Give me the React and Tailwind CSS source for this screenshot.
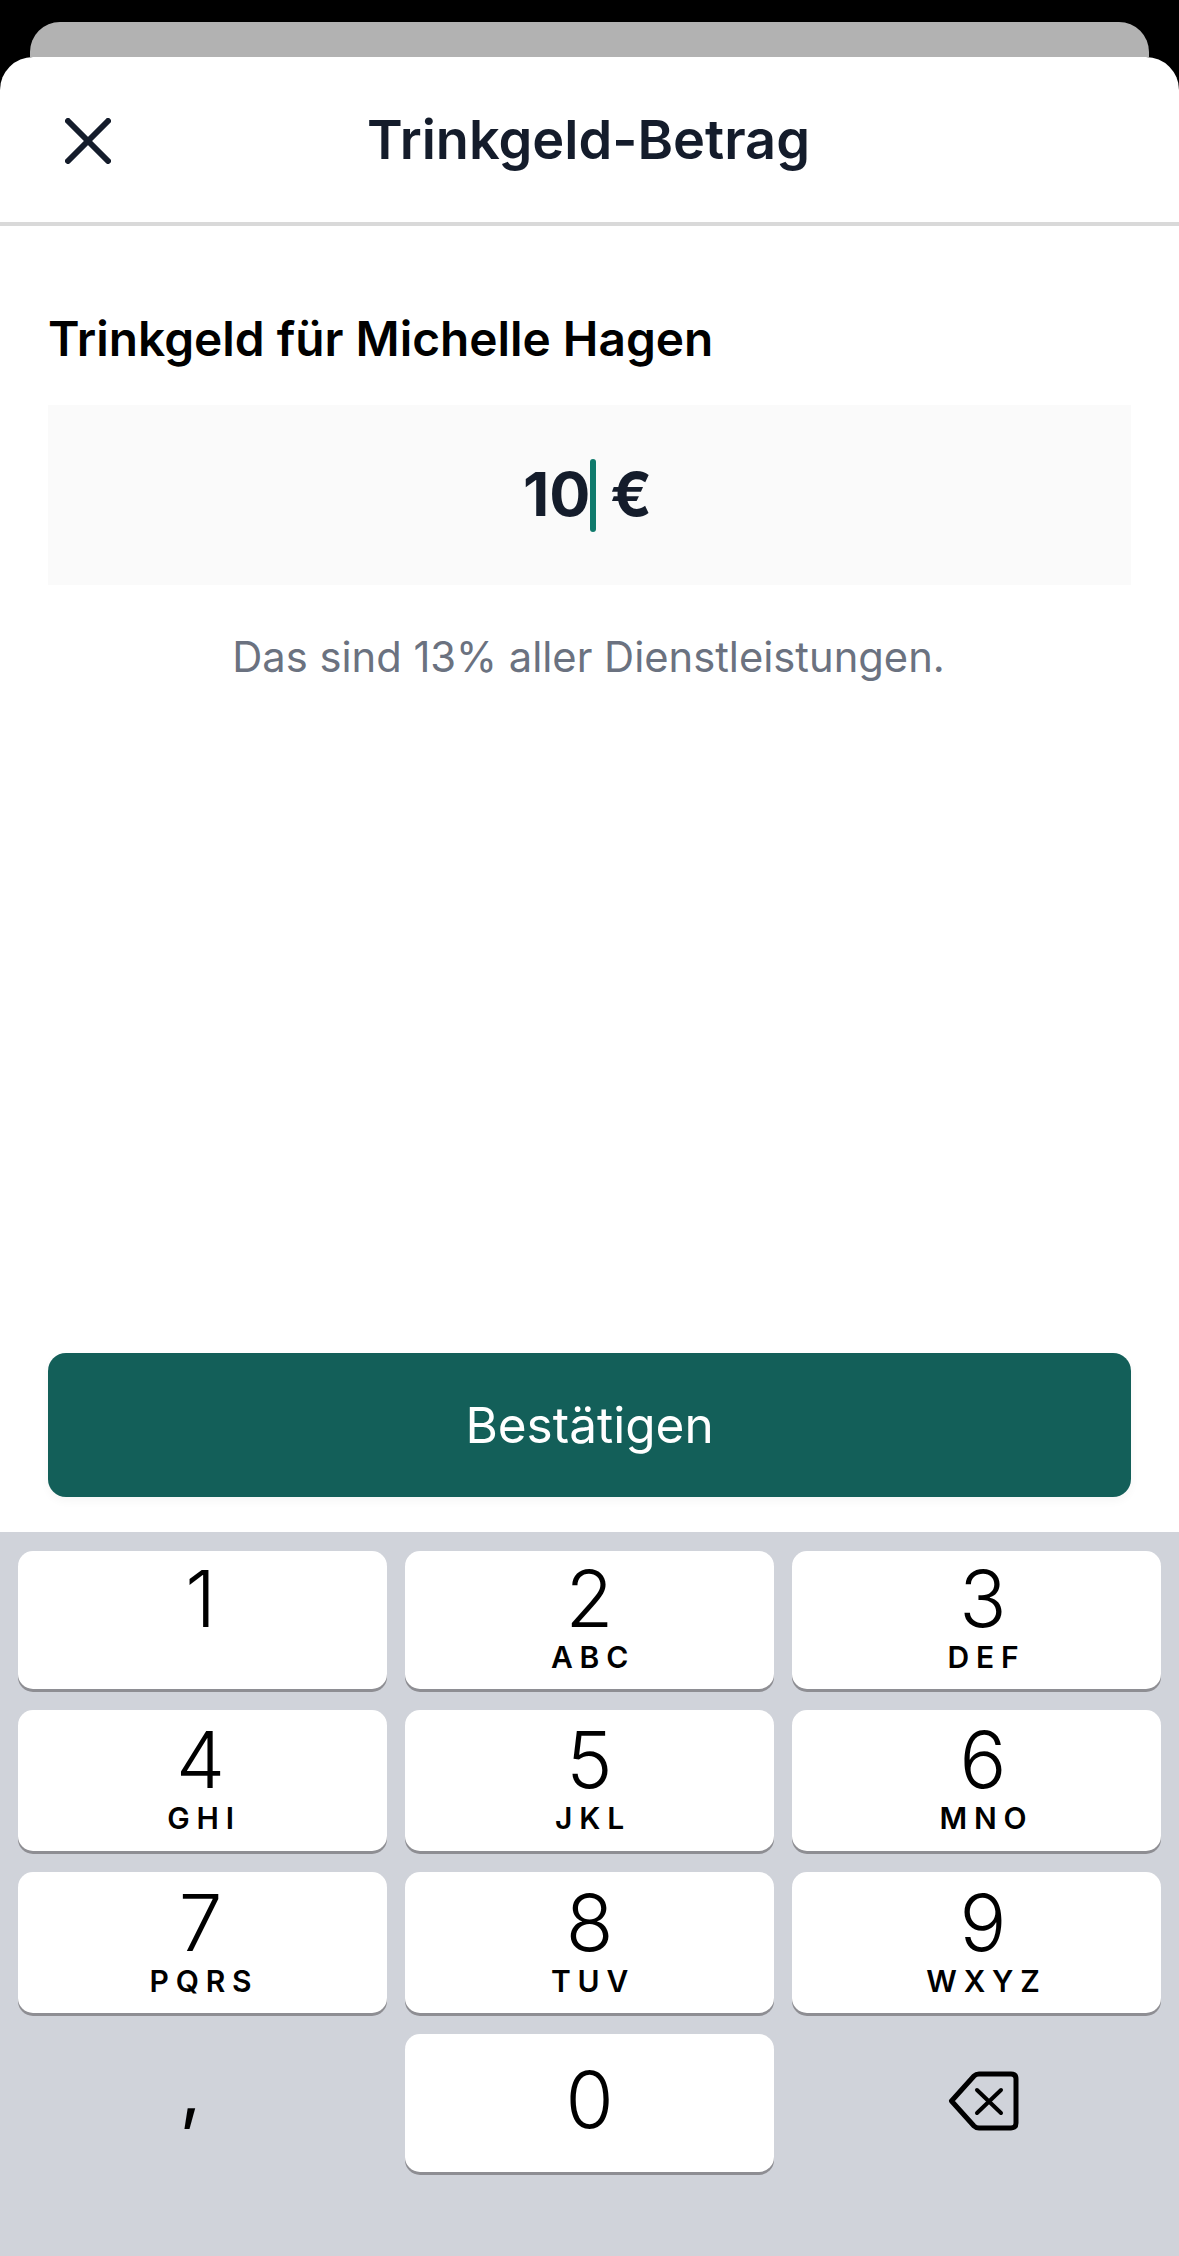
import React from 'react';

const rows = [
  { height: 'h-[138px]', top: 'pt-[10px]', keys: [['1', ''], ['2', 'ABC'], ['3', 'DEF']] },
  { height: 'h-[141px]', top: 'pt-[12px]', keys: [['4', 'GHI'], ['5', 'JKL'], ['6', 'MNO']] },
  { height: 'h-[141px]', top: 'pt-[13px]', keys: [['7', 'PQRS'], ['8', 'TUV'], ['9', 'WXYZ']] },
];

// last column in the reference sits a few pixels right of the key center
const columnOffset = ['pr-[4px]', '', 'pl-[13px]'];

const Key = ({ digit, letters, height, top, offset = '' }) => (
  <div className={`${height} ${top} ${offset} flex flex-col items-center rounded-[15px] bg-white text-black shadow-[0_3px_0_#8e8e93]`}>
    <span className="text-[78px] leading-[75px] font-[350]">{digit}</span>
    {letters && (
      <span className="mt-[3px] pl-[7px] text-[30px] leading-[36px] font-semibold tracking-[6.8px]">{letters}</span>
    )}
  </div>
);

const CloseIcon = () => (
  <svg width="46" height="46" viewBox="0 0 46 46" fill="none" stroke="#141c2b" strokeWidth="6" strokeLinecap="round">
    <path d="M3 3 L43 43" />
    <path d="M43 3 L3 43" />
  </svg>
);

const BackspaceIcon = () => (
  <svg width="72" height="60" viewBox="0 0 72 60" fill="none" stroke="#000" strokeLinejoin="round" strokeLinecap="round">
    <path d="M3.5 30 L26 5 Q28 3 31 3 L63 3 Q68 3 68 8 L68 52 Q68 57 63 57 L31 57 Q28 57 26 55 Z" strokeWidth="5" />
    <path d="M29 19 L53 42 M53 19 L29 42" strokeWidth="4" />
  </svg>
);

export default function App() {
  return (
    <div className="flex h-[2256px] flex-col overflow-hidden bg-black font-['Inter',sans-serif]">
      <div className="mx-[30px] mt-[22px] h-[35px] shrink-0 rounded-t-[30px] bg-[#b2b2b2]" />

      <div className="flex flex-1 flex-col rounded-t-[33px] bg-white">
        {/* Header */}
        <div className="relative flex h-[169px] shrink-0 items-center justify-center border-b-4 border-[#d9d9d9]">
          <button className="absolute left-[65px] top-[61px]">
            <CloseIcon />
          </button>
          <h1 className="pr-[2px] text-[54.1px] leading-[64px] font-semibold text-[#141c2b]">Trinkgeld-Betrag</h1>
        </div>

        {/* Tip form */}
        <div className="flex flex-1 flex-col px-[48px]">
          <h2 className="mt-[85px] text-[47.8px] leading-[56px] font-semibold text-black">Trinkgeld für Michelle Hagen</h2>
          <div className="mt-[38px] flex h-[180px] items-center justify-center bg-[#fafafa] pr-[4px] text-[61px] font-bold text-[#141c2b]">
            <span>10</span>
            <span className="h-[73px] w-[6px] rounded-full bg-[#0f7a6c]" />
            <span className="ml-[14px]">€</span>
          </div>
          <p className="mt-[47px] pr-[2px] text-center text-[41.7px] leading-[50px] text-[#6b7280]">Das sind 13% aller Dienstleistungen.</p>

          <button className="mt-auto mb-[35px] flex h-[144px] items-center justify-center rounded-[18px] bg-[#135f59] text-[49.5px] text-white shadow-[0_4px_10px_rgba(0,0,0,0.04)]">
            Bestätigen
          </button>
        </div>

        {/* Number keyboard */}
        <div className="flex h-[724px] shrink-0 flex-col gap-[21px] bg-[#d0d3da] px-[18px] pt-[19px]">
          {rows.map((row) => (
            <div key={row.keys[0][0]} className="grid grid-cols-3 gap-x-[18px]">
              {row.keys.map(([digit, letters], i) => (
                <Key key={digit} digit={digit} letters={letters} height={row.height} top={row.top} offset={columnOffset[i]} />
              ))}
            </div>
          ))}
          <div className="grid grid-cols-3 gap-x-[18px]">
            <div className="flex h-[138px] justify-center pr-[24px] pt-[17px] text-[75px] leading-[75px] text-black">,</div>
            <Key digit="0" letters="" height="h-[138px]" top="pt-[28px]" />
            <div className="flex h-[138px] items-center justify-center pb-[5px] pl-[14px]">
              <BackspaceIcon />
            </div>
          </div>
        </div>
      </div>
    </div>
  );
}
